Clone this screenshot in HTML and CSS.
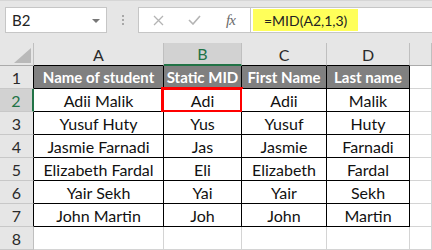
FILE: index.html
```html
<!DOCTYPE html>
<html>
<head>
<meta charset="utf-8">
<link rel="stylesheet" href="styles.css">
</head>
<body>
<div class="app">
  <div class="toolbar">
    <div class="namebox">
      <span class="nb-text">B2</span>
      <svg class="nb-arrow" width="8" height="4" viewBox="0 0 8 4"><polygon points="0,0 8,0 4,4" fill="#777"/></svg>
    </div>
    <div class="grip"><i></i><i></i><i></i></div>
    <div class="fbar">
      <div class="fbtns">
        <svg class="ic-x" width="11" height="11" viewBox="0 0 11 11"><path d="M1 1 L10 10 M10 1 L1 10" stroke="#b4b4b4" stroke-width="1.3" fill="none"/></svg>
        <svg class="ic-check" width="13" height="10" viewBox="0 0 13 10"><path d="M1 5 L5 9 L12 1" stroke="#b4b4b4" stroke-width="1.6" fill="none"/></svg>
        <span class="ic-fx">fx</span>
      </div>
      <div class="finput"><span class="formula">=MID(A2,1,3)</span></div>
    </div>
  </div>
  <div class="sheet">
    <div class="ch corner"><svg class="tri" width="17" height="15" viewBox="0 0 17 15"><polygon points="17,0 17,15 0,15" fill="#b9b9b9"/></svg></div>
    <div class="ch tb">A</div>
    <div class="ch tb sel">B</div>
    <div class="ch tb">C</div>
    <div class="ch tb">D</div>
    <div class="ch"></div>

    <div class="rh tl">1</div>
    <div class="c head">Name of student</div>
    <div class="c head">Static MID</div>
    <div class="c head">First Name</div>
    <div class="c head">Last name</div>
    <div class="c e"></div>

    <div class="rh rsel">2</div>
    <div class="c">Adii Malik</div>
    <div class="c active">Adi</div>
    <div class="c">Adii</div>
    <div class="c">Malik</div>
    <div class="c e"></div>

    <div class="rh tl">3</div>
    <div class="c">Yusuf Huty</div>
    <div class="c">Yus</div>
    <div class="c">Yusuf</div>
    <div class="c">Huty</div>
    <div class="c e"></div>

    <div class="rh tl">4</div>
    <div class="c">Jasmie Farnadi</div>
    <div class="c">Jas</div>
    <div class="c">Jasmie</div>
    <div class="c">Farnadi</div>
    <div class="c e"></div>

    <div class="rh tl">5</div>
    <div class="c">Elizabeth Fardal</div>
    <div class="c">Eli</div>
    <div class="c">Elizabeth</div>
    <div class="c">Fardal</div>
    <div class="c e"></div>

    <div class="rh tl">6</div>
    <div class="c">Yair Sekh</div>
    <div class="c">Yai</div>
    <div class="c">Yair</div>
    <div class="c">Sekh</div>
    <div class="c e"></div>

    <div class="rh tl">7</div>
    <div class="c">John Martin</div>
    <div class="c">Joh</div>
    <div class="c">John</div>
    <div class="c">Martin</div>
    <div class="c e"></div>

    <div class="rh">8</div>
    <div class="c e"></div>
    <div class="c e"></div>
    <div class="c e"></div>
    <div class="c e"></div>
    <div class="c e"></div>
  </div>
</div>
</body>
</html>
```
FILE: styles.css
```css
* { box-sizing: border-box; }
html, body { margin: 0; padding: 0; background: #fff; }
body {
  font-family: Lato, "Open Sans", sans-serif;
  font-size: 16px;
  color: #111;
  width: 432px;
  height: 250px;
  overflow: hidden;
}
.app { width: 432px; height: 250px; }

.toolbar {
  height: 43px;
  background: #e6e6e6;
  border-top: 1px solid #d6d6d6;
  display: flex;
  align-items: flex-start;
  padding: 6px 0 0 5px;
}
.namebox {
  width: 102px;
  height: 26px;
  background: #fff;
  border: 1px solid #c6c6c6;
  display: flex;
  align-items: center;
  justify-content: space-between;
  padding: 0 6px 0 6px;
}
.nb-text { font-size: 15px; color: #222; }
.nb-arrow { margin-top: 1px; }
.grip {
  width: 31px;
  height: 26px;
  display: flex;
  flex-direction: column;
  align-items: center;
  justify-content: center;
  gap: 2px;
}
.grip i { display: block; width: 2px; height: 2px; background: #a8a8a8; }
.fbar {
  flex: 1;
  height: 26px;
  background: #fff;
  border: 1px solid #c6c6c6;
  border-right: none;
  display: flex;
}
.fbtns {
  width: 112px;
  border-right: 1px solid #c6c6c6;
  display: flex;
  align-items: center;
  padding-left: 14px;
}
.ic-x { margin-right: 24px; }
.ic-check { margin-right: 25px; }
.ic-fx {
  font-family: "Liberation Serif", serif;
  font-style: italic;
  font-size: 15px;
  color: #6a6a6a;
  letter-spacing: -1px;
}
.finput { flex: 1; padding: 1px 0 0 2px; }
.formula {
  display: flex;
  align-items: center;
  width: 105px;
  height: 22px;
  background: #ffff5a;
  padding-left: 11px;
  font-size: 14px;
  color: #222;
}

.sheet {
  display: grid;
  grid-template-columns: 34px 130px 78px 85px 83px 1fr;
  grid-template-rows: repeat(9, 23px);
}
.ch, .rh, .c {
  display: flex;
  align-items: center;
  justify-content: center;
  border-right: 1px solid #d4d4d4;
  border-bottom: 1px solid #d4d4d4;
  position: relative;
  white-space: nowrap;
}
.ch {
  background: #e6e6e6;
  color: #2a2a2a;
  border-right-color: #bfbfbf;
  border-bottom-color: #ababab;
}
.ch.tb { border-bottom-color: #000; }
.ch.sel {
  background: #d2d2d2;
  color: #217346;
  border-bottom: 2px solid #217346;
}
.corner { justify-content: flex-end; align-items: flex-end; padding: 0 2px 2px 0; }
.rh {
  background: #e6e6e6;
  color: #2a2a2a;
  border-right-color: #bfbfbf;
  border-bottom-color: #c8c8c8;
}
.rh.tl { border-right-color: #000; }
.rh.rsel {
  background: #d2d2d2;
  color: #217346;
  border-right: 2px solid #217346;
}
.c {
  background: #fff;
  border-right-color: #000;
  border-bottom-color: #000;
}
.c.e { border-right-color: #d4d4d4; border-bottom-color: #d4d4d4; }
.c.head {
  background: #808080;
  color: #fff;
  font-weight: bold;
  font-size: 15px;
}
.c.active::after {
  content: "";
  position: absolute;
  top: -2px;
  left: -3px;
  right: -2px;
  bottom: -2px;
  border: 3px solid #f00;
}
```
